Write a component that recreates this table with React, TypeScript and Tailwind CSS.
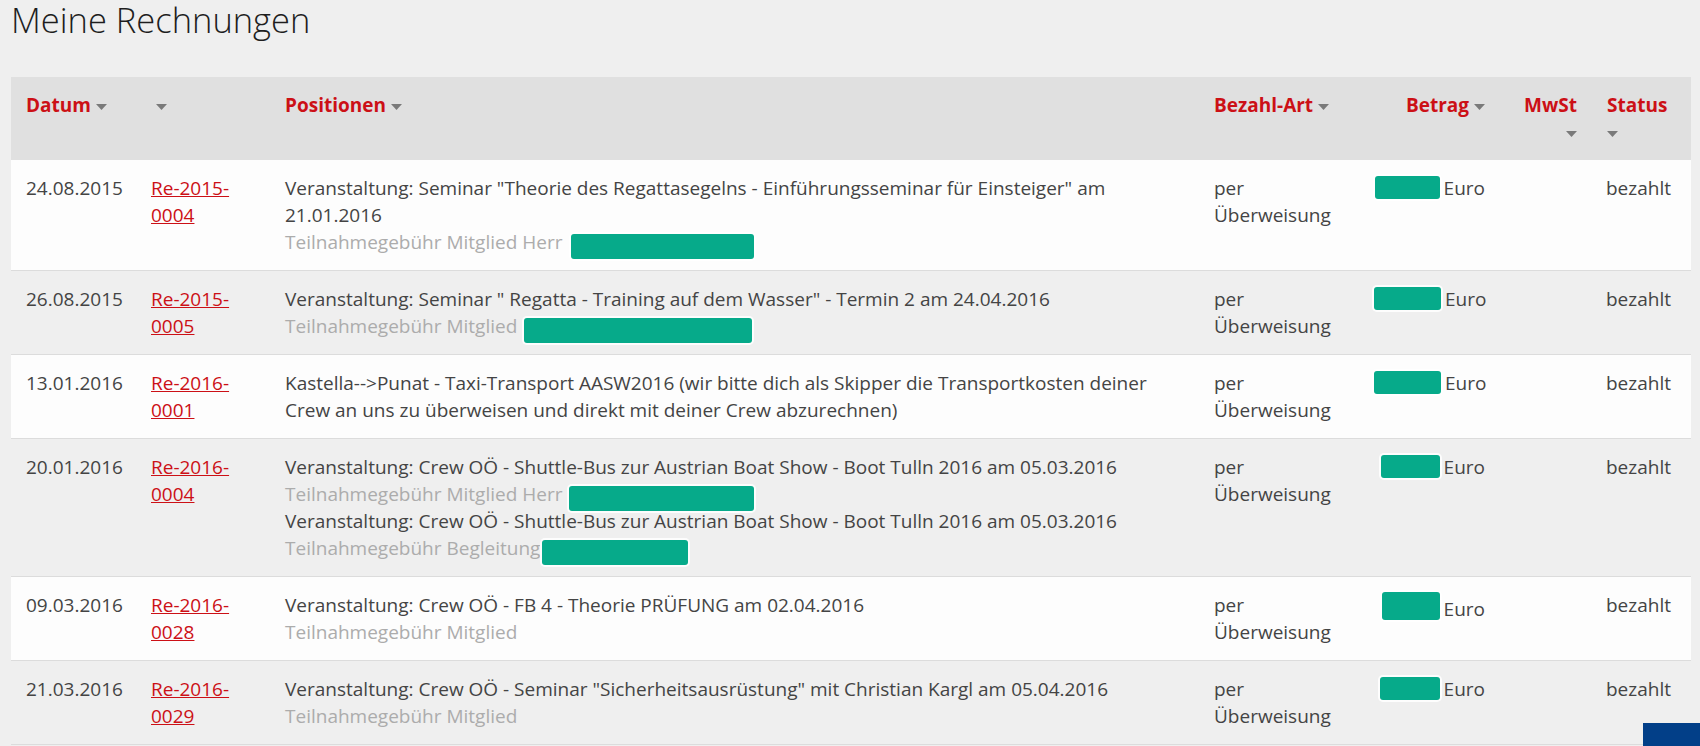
import React from "react";

type Item = { title: string; sub?: string; box?: number; gap?: number };
type Row = {
  date: string;
  nr: string;
  items: Item[];
  amount: number;
  amountH?: number;
  white: boolean;
};

const shuttle =
  "Veranstaltung: Crew OÖ - Shuttle-Bus zur Austrian Boat Show - Boot Tulln 2016 am 05.03.2016";

const rows: Row[] = [
  {
    date: "24.08.2015",
    nr: "Re-2015-0004",
    items: [
      {
        title:
          'Veranstaltung: Seminar "Theorie des Regattasegelns - Einführungsseminar für Einsteiger" am 21.01.2016',
        sub: "Teilnahmegebühr Mitglied Herr",
        box: 183,
        gap: 4,
      },
    ],
    amount: 65,
    white: true,
  },
  {
    date: "26.08.2015",
    nr: "Re-2015-0005",
    items: [
      {
        title:
          'Veranstaltung: Seminar " Regatta - Training auf dem Wasser" - Termin 2 am 24.04.2016',
        sub: "Teilnahmegebühr Mitglied",
        box: 228,
        gap: 2,
      },
    ],
    amount: 67,
    white: false,
  },
  {
    date: "13.01.2016",
    nr: "Re-2016-0001",
    items: [
      {
        title:
          "Kastella-->Punat - Taxi-Transport AASW2016 (wir bitte dich als Skipper die Transportkosten deiner Crew an uns zu überweisen und direkt mit deiner Crew abzurechnen)",
      },
    ],
    amount: 67,
    white: true,
  },
  {
    date: "20.01.2016",
    nr: "Re-2016-0004",
    items: [
      { title: shuttle, sub: "Teilnahmegebühr Mitglied Herr", box: 185, gap: 2 },
      { title: shuttle, sub: "Teilnahmegebühr Begleitung", box: 146, gap: -3 },
    ],
    amount: 59,
    white: false,
  },
  {
    date: "09.03.2016",
    nr: "Re-2016-0028",
    items: [
      {
        title: "Veranstaltung: Crew OÖ - FB 4 - Theorie PRÜFUNG am 02.04.2016",
        sub: "Teilnahmegebühr Mitglied",
      },
    ],
    amount: 58,
    amountH: 28,
    white: true,
  },
  {
    date: "21.03.2016",
    nr: "Re-2016-0029",
    items: [
      {
        title:
          'Veranstaltung: Crew OÖ - Seminar "Sicherheitsausrüstung" mit Christian Kargl am 05.04.2016',
        sub: "Teilnahmegebühr Mitglied",
      },
    ],
    amount: 60,
    white: false,
  },
];

const Arrow: React.FC<{ solo?: boolean }> = ({ solo }) => (
  <svg
    width="11"
    height="6"
    viewBox="0 0 11 6"
    className={`inline-block align-middle ${solo ? "ml-[5px]" : ""}`}
  >
    <polygon points="0,0 11,0 5.5,6" fill="#7a7a7a" />
  </svg>
);

const Head: React.FC<{ label: string; right?: boolean }> = ({ label, right }) => (
  <th
    className={`px-[15px] pt-[15px] pb-[14px] align-top font-bold text-[#cc1016] ${
      right ? "text-right" : "text-left"
    }`}
  >
    {label ? (
      <>
        {label} <Arrow />
      </>
    ) : (
      <Arrow solo />
    )}
  </th>
);

const cell = "px-[15px] pt-[15px] pb-[14px] align-top";

const App: React.FC = () => {
  return (
    <div className="relative min-h-[746px] bg-[#efefef] font-['Open_Sans',sans-serif] text-[19px] leading-[27px] text-[#444]">
      <div className="px-[11px]">
        <h1 className="mb-[37px] text-[34.5px] font-light leading-[40px] text-[#1e1e1e]">
          Meine Rechnungen
        </h1>
        <table className="w-[1680px] table-fixed border-collapse">
          <colgroup>
            <col className="w-[125px]" />
            <col className="w-[134px]" />
            <col className="w-[929px]" />
            <col className="w-[160px]" />
            <col className="w-[141px]" />
            <col className="w-[92px]" />
            <col className="w-[99px]" />
          </colgroup>
          <thead className="bg-[#e0e0e0]">
            <tr>
              <Head label="Datum" />
              <Head label="" />
              <Head label="Positionen" />
              <Head label="Bezahl-Art" />
              <Head label="Betrag" right />
              <Head label="MwSt" right />
              <Head label="Status" />
            </tr>
          </thead>
          <tbody>
            {rows.map((row) => (
              <tr
                key={row.nr}
                className={`border-b border-[#dcdcdc] ${
                  row.white ? "bg-[#fdfdfd]" : "bg-[#efefef]"
                }`}
              >
                <td className={cell}>{row.date}</td>
                <td className={cell}>
                  <a href="#" className="text-[#cc1016] underline">
                    {row.nr}
                  </a>
                </td>
                <td className={cell}>
                  {row.items.map((item, i) => (
                    <div key={i}>
                      <div>{item.title}</div>
                      {item.sub && (
                        <div className="text-[#acacac]">
                          {item.sub}
                          {item.box && (
                            <span
                              className="-mb-[3px] inline-block h-[25px] rounded-[3px] bg-[#06aa8a] align-[-7px] ring-2 ring-white/90"
                              style={{ width: item.box, marginLeft: 5 + (item.gap ?? 0) }}
                            />
                          )}
                        </div>
                      )}
                    </div>
                  ))}
                </td>
                <td className={cell}>per Überweisung</td>
                <td className={`${cell} whitespace-nowrap text-right`}>
                  <span
                    className="mr-[4px] inline-block rounded-[3px] bg-[#06aa8a] align-[-4px] ring-2 ring-white/90"
                    style={{ width: row.amount, height: row.amountH ?? 23 }}
                  />
                  Euro
                </td>
                <td className={cell}></td>
                <td className="px-[14px] pt-[15px] pb-[14px] align-top">bezahlt</td>
              </tr>
            ))}
          </tbody>
        </table>
      </div>
      <div className="absolute top-[723px] right-0 h-[40px] w-[57px] bg-[#023f88]" />
    </div>
  );
};

export default App;
